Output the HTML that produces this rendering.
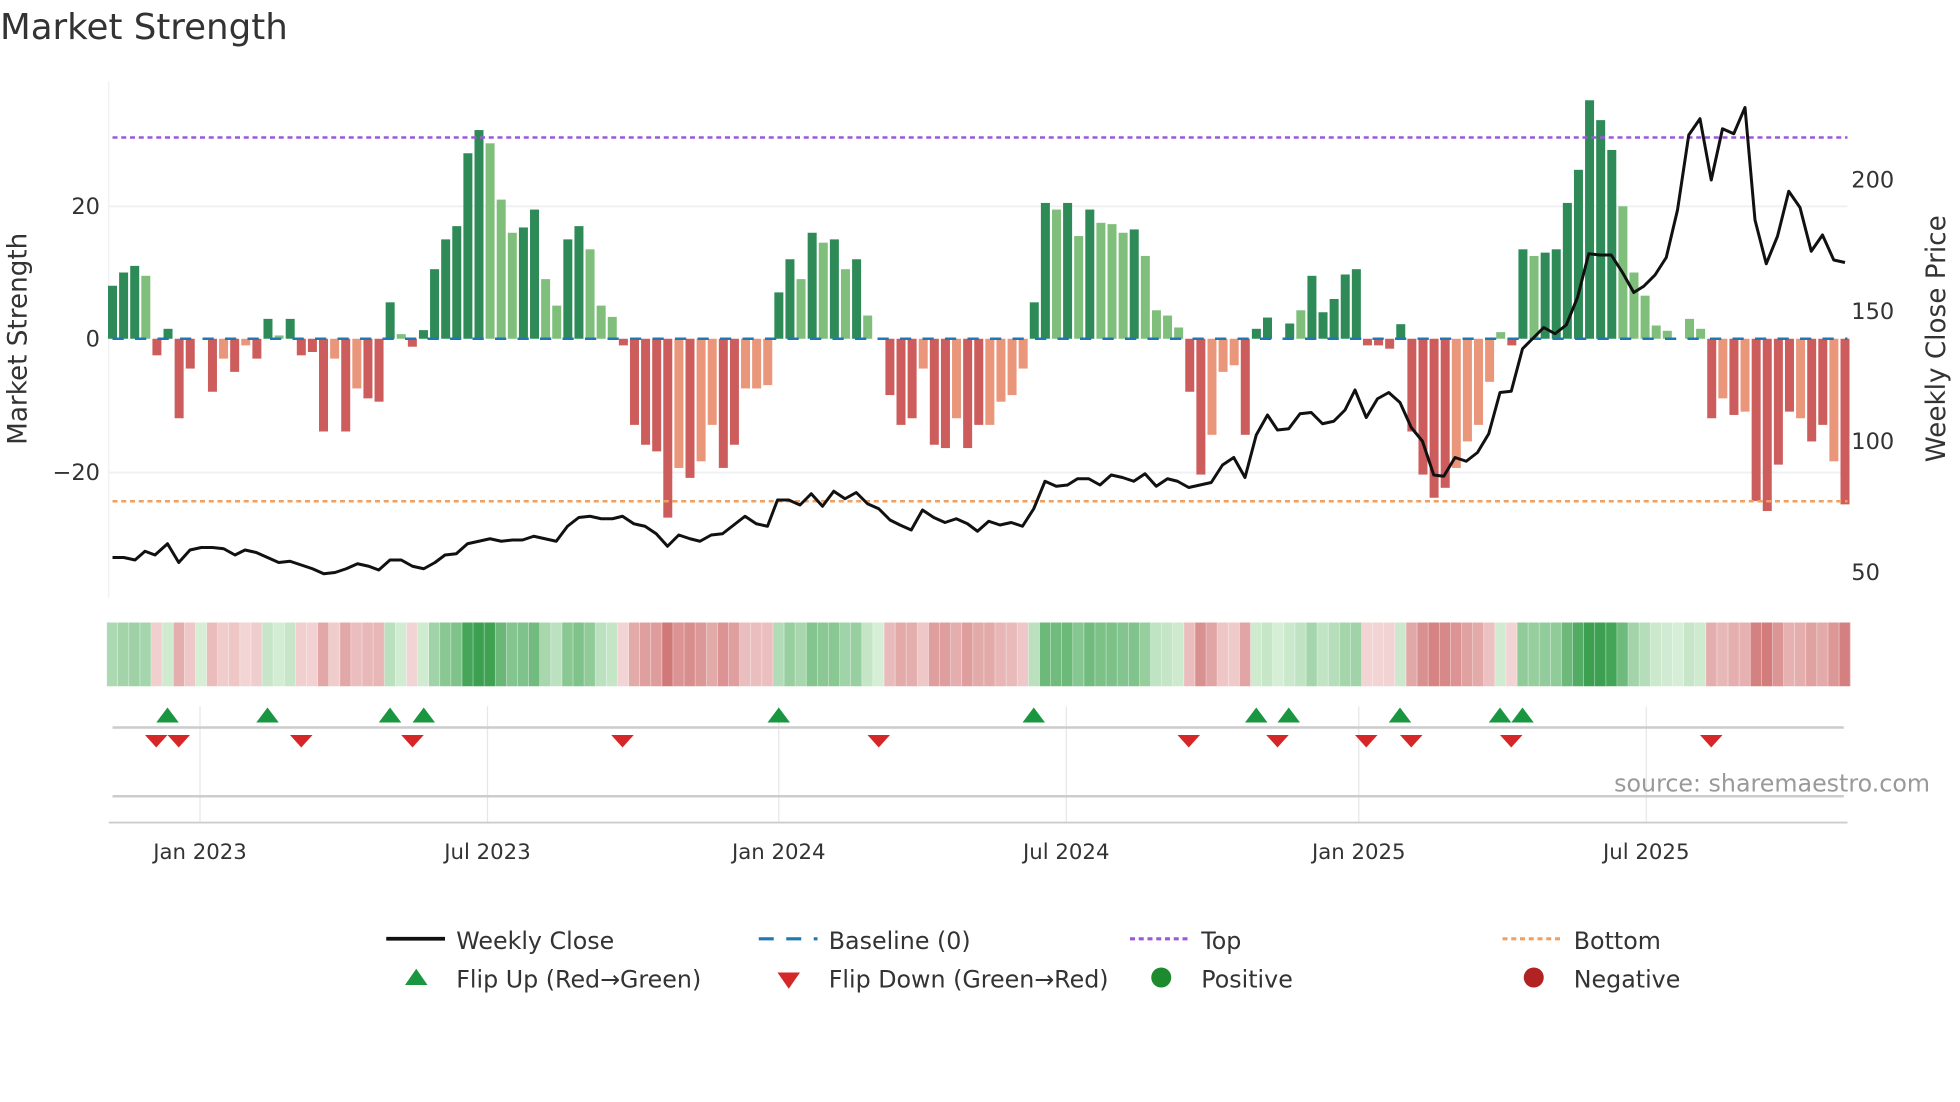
<!DOCTYPE html>
<html><head><meta charset="utf-8"><style>
html,body{margin:0;padding:0;background:#fff;width:1960px;height:1102px;overflow:hidden}
svg{display:block}
text{font-family:"DejaVu Sans","Liberation Sans",sans-serif;fill:#333}
</style></head><body>
<svg id="s" width="1960" height="1102" viewBox="0 0 1568 881.6" xmlns="http://www.w3.org/2000/svg">
<text x="0" y="31" font-size="28.5">Market Strength</text>
<line x1="87" y1="65" x2="87" y2="478" stroke="#eef0f3" stroke-width="1"/>
<line x1="87" y1="165" x2="1478" y2="165" stroke="#eef0f3" stroke-width="1.5"/>
<line x1="87" y1="378" x2="1478" y2="378" stroke="#eef0f3" stroke-width="1.5"/>
<g id="bars"></g>
<line x1="90" y1="271" x2="1478" y2="271" stroke="#1f77b4" stroke-width="2" stroke-dasharray="9,9"/>
<line x1="90" y1="110" x2="1478" y2="110" stroke="#9b59d9" stroke-width="2" stroke-dasharray="4,3"/>
<line x1="90" y1="401" x2="1478" y2="401" stroke="#f0a060" stroke-width="2" stroke-dasharray="4,3"/>
<polyline id="price" fill="none" stroke="#111" stroke-width="2.4" stroke-linejoin="round"/>
<text x="80" y="171" font-size="18" text-anchor="end">20</text>
<text x="80" y="277" font-size="18" text-anchor="end">0</text>
<text x="80" y="384" font-size="18" text-anchor="end">−20</text>
<text x="1481" y="150" font-size="18">200</text>
<text x="1481" y="255" font-size="18">150</text>
<text x="1481" y="359" font-size="18">100</text>
<text x="1481" y="464" font-size="18">50</text>
<text transform="translate(21,271) rotate(-90)" font-size="21" text-anchor="middle">Market Strength</text>
<text transform="translate(1556,271) rotate(-90)" font-size="21" text-anchor="middle">Weekly Close Price</text>
<g id="heat"></g>
<g stroke="#e6e6e6" stroke-width="1">
<line x1="160" y1="565" x2="160" y2="658"/><line x1="390" y1="565" x2="390" y2="658"/>
<line x1="623" y1="565" x2="623" y2="658"/><line x1="853" y1="565" x2="853" y2="658"/>
<line x1="1087" y1="565" x2="1087" y2="658"/><line x1="1317" y1="565" x2="1317" y2="658"/>
</g>
<line x1="90" y1="582" x2="1475" y2="582" stroke="#ccc" stroke-width="2"/>
<line x1="90" y1="637" x2="1475" y2="637" stroke="#ccc" stroke-width="2"/>
<line x1="87" y1="658" x2="1478" y2="658" stroke="#ccc" stroke-width="1.5"/>
<g id="marks"></g>
<text x="1544" y="633" font-size="19" text-anchor="end" style="fill:#999">source: sharemaestro.com</text>
<g font-size="17" text-anchor="middle">
<text x="160" y="687">Jan 2023</text><text x="390" y="687">Jul 2023</text>
<text x="623" y="687">Jan 2024</text><text x="853" y="687">Jul 2024</text>
<text x="1087" y="687">Jan 2025</text><text x="1317" y="687">Jul 2025</text>
</g>
<g font-size="19">
<line x1="309" y1="751" x2="356" y2="751" stroke="#111" stroke-width="3"/>
<text x="365" y="759">Weekly Close</text>
<line x1="607" y1="751" x2="654" y2="751" stroke="#1f77b4" stroke-width="2.5" stroke-dasharray="12,10"/>
<text x="663" y="759">Baseline (0)</text>
<line x1="904" y1="751" x2="951" y2="751" stroke="#9b59d9" stroke-width="2.5" stroke-dasharray="4,3"/>
<text x="961" y="759">Top</text>
<line x1="1202" y1="751" x2="1249" y2="751" stroke="#f0a060" stroke-width="2.5" stroke-dasharray="4,3"/>
<text x="1259" y="759">Bottom</text>
<polygon points="324,788 333,775 342,788" fill="#1a9641"/>
<text x="365" y="790">Flip Up (Red→Green)</text>
<polygon points="622,778 640,778 631,791" fill="#d62728"/>
<text x="663" y="790">Flip Down (Green→Red)</text>
<circle cx="929" cy="782" r="8" fill="#1e8a2e"/>
<text x="961" y="790">Positive</text>
<circle cx="1227" cy="782" r="8" fill="#b22222"/>
<text x="1259" y="790">Negative</text>
</g>
</svg>
<script>
var v=[8,10,11,9.5,-2.5,1.5,-12,-4.5,0,-8,-3,-5,-1,-3,3,0.5,3,-2.5,-2,-14,-3,-14,-7.5,-9,-9.5,5.5,0.7,-1.2,1.3,10.5,15,17,28,31.5,29.5,21,16,16.8,19.5,9,5,15,17,13.5,5,3.3,-1,-13,-16,-17,-27,-19.5,-21,-18.5,-13,-19.5,-16,-7.5,-7.5,-7,7,12,9,16,14.5,15,10.5,12,3.5,0,-8.5,-13,-12,-4.5,-16,-16.5,-12,-16.5,-13,-13,-9.5,-8.5,-4.5,5.5,20.5,19.5,20.5,15.5,19.5,17.5,17.3,16,16.5,12.5,4.3,3.5,1.7,-8,-20.5,-14.5,-5,-4,-14.5,1.5,3.2,0,2.3,4.3,9.5,4,6,9.7,10.5,-1,-1,-1.5,2.2,-14,-20.5,-24,-22.5,-19.5,-15.5,-13,-6.5,1,-1,13.5,12.5,13,13.5,20.5,25.5,36,33,28.5,20,10,6.5,2,1.2,0,3,1.5,-12,-9,-11.5,-11,-24.5,-26,-19,-11,-12,-15.5,-13,-18.5,-25];
var light={3:1,15:1,34:1,35:1,36:1,39:1,40:1,43:1,44:1,45:1,51:1,53:1,54:1,57:1,58:1,59:1,62:1,64:1,66:1,68:1,73:1,76:1,79:1,80:1,81:1,82:1,85:1,87:1,89:1,90:1,91:1,93:1,94:1,95:1,96:1,99:1,100:1,101:1,26:1,10:1,12:1,20:1,22:1,107:1,121:1,122:1,123:1,124:1,125:1,128:1,136:1,137:1,138:1,139:1,140:1,141:1,142:1,143:1,145:1,147:1,152:1,155:1,8:1};
var ns="http://www.w3.org/2000/svg",b=document.getElementById('bars'),h=document.getElementById('heat');
function el(t,a,p){var e=document.createElementNS(ns,t);for(var k in a)e.setAttribute(k,a[k]);p.appendChild(e);return e}
function mix(a,c,t){var r=[];for(var i=0;i<3;i++)r.push(Math.round(a[i]+(c[i]-a[i])*t));return 'rgb('+r+')'}
var dx=(1476-90)/(v.length-1);
for(var i=0;i<v.length;i++){var x=90+dx*i,val=v[i],y=271-val*5.3,l=light[i];
 var c=val>=0?(l?'#7fbf7b':'#2e8b57'):(l?'#e9967a':'#cd5c5c');
 if(val!=0)el('rect',{x:x-3.6,y:Math.min(y,271),width:7.2,height:Math.abs(val*5.3),fill:c},b);
 var t=Math.min(Math.abs(val)/30,1),hc=val>=0?mix([214,238,214],[60,160,80],t):mix([244,216,216],[205,110,110],t);
 el('rect',{x:x-4.5,y:498,width:dx+0.2,height:51,fill:hc},h);
 el('rect',{x:x+dx-5,y:498,width:1,height:51,fill:'#fff','fill-opacity':0.6},h);}
var p=[90,446,99,446,108,448,116,441,124,444,134,435,143,450,152,440,161,438,170,438,179,439,188,444,196,440,205,442,214,446,223,450,232,449,241,452,250,455,259,459,268,458,277,455,286,451,295,453,303,456,312,448,321,448,330,453,339,455,348,450,356,444,365,443,374,435,383,433,392,431,401,433,410,432,418,432,427,429,436,431,445,433,454,421,463,414,472,413,481,415,490,415,498,413,507,419,516,421,525,427,534,437,543,428,552,431,560,433,569,428,578,427,587,420,596,413,605,419,614,421,622,400,631,400,640,404,649,395,658,405,667,393,676,399,685,394,694,403,703,407,712,416,720,420,729,424,738,408,747,414,756,418,765,415,774,419,782,425,791,417,800,420,809,418,818,421,827,407,836,385,845,389,854,388,862,383,871,383,880,388,889,380,898,382,907,385,916,379,925,389,934,383,942,385,951,390,960,388,969,386,978,372,987,366,996,382,1005,348,1014,332,1022,344,1031,343,1040,331,1049,330,1058,339,1067,337,1076,328,1084,312,1093,334,1102,319,1111,314,1120,322,1129,342,1138,353,1147,380,1155,381,1164,366,1173,369,1182,362,1191,347,1200,314,1209,313,1218,279,1227,270,1235,262,1244,267,1253,260,1262,238,1271,203,1280,204,1289,204,1298,218,1307,234,1315,229,1324,220,1333,206,1342,168,1351,108,1360,95,1369,144,1378,103,1387,107,1396,86,1404,176,1413,211,1422,189,1431,153,1440,166,1449,201,1458,188,1467,208,1476,210];
var s='';for(var i=0;i<p.length;i+=2)s+=p[i]+','+p[i+1]+' ';document.getElementById('price').setAttribute('points',s);
var m=document.getElementById('marks');
[134,214,312,339,623,827,1005,1031,1120,1200,1218].forEach(function(x){el('polygon',{points:(x-9)+',578 '+x+',566 '+(x+9)+',578',fill:'#1a9641'},m)});
[125,143,241,330,498,703,951,1022,1093,1129,1209,1369].forEach(function(x){el('polygon',{points:(x-9)+',588 '+(x+9)+',588 '+x+',598',fill:'#d62728'},m)});
</script>
</body></html>
